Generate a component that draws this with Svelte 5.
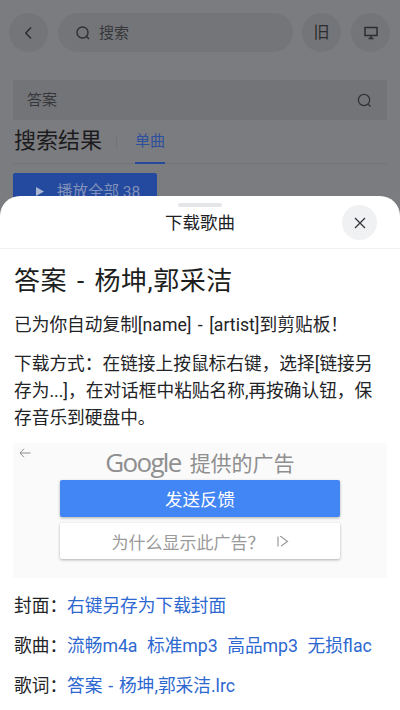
<script>
  const songLinks = ['流畅m4a', '标准mp3', '高品mp3', '无损flac']
</script>

<div class="page">
  <div class="behind">
    <div class="topbar">
      <button class="round" aria-label="返回">
        <svg width="16" height="16" viewBox="0 0 16 16"><path d="M10 2.500 4.800 8l5.200 5.500" fill="none" stroke="#2c2d30" stroke-width="1.500" /></svg>
      </button>
      <div class="pill">
        <svg width="16" height="16" viewBox="0 0 16 16"><circle cx="7.500" cy="7.500" r="5.500" fill="none" stroke="#2e2f33" stroke-width="1.400" /><path d="M11.500 11.500 14 14" stroke="#2e2f33" stroke-width="1.400" /></svg>
        <span>搜索</span>
      </div>
      <button class="round old">旧</button>
      <button class="round" aria-label="桌面">
        <svg width="16" height="16" viewBox="0 0 16 16"><path d="M2 2.500h12v8H2z" fill="none" stroke="#2c2d30" stroke-width="1.500" /><path d="M8 10.500v3M5.500 13.500h5" stroke="#2c2d30" stroke-width="1.500" /></svg>
      </button>
    </div>

    <div class="query">
      <span>答案</span>
      <svg width="15" height="15" viewBox="0 0 16 16"><circle cx="7.500" cy="7.500" r="6" fill="none" stroke="#303135" stroke-width="1.300" /><path d="M12 12l2.500 2.500" stroke="#303135" stroke-width="1.300" /></svg>
    </div>

    <div class="results">
      <h2>搜索结果</h2>
      <i class="sep"></i>
      <span class="tab">单曲</span>
    </div>

    <div class="play">
      <svg width="8" height="9" viewBox="0 0 8 9"><path d="M0 0l8 4.500-8 4.500z" fill="#a7b4d2" /></svg>
      <span>播放全部 38</span>
    </div>
  </div>

  <section class="sheet">
    <i class="handle"></i>
    <header>
      <span>下载歌曲</span>
      <button class="close" aria-label="关闭">
        <svg width="12" height="12" viewBox="0 0 12 12"><path d="M1 1l10 10M11 1 1 11" stroke="#33353a" stroke-width="1.300" /></svg>
      </button>
    </header>

    <div class="body">
      <h1>答案 - 杨坤,郭采洁</h1>
      <p class="copied">已为你自动复制[name] - [artist]到剪贴板！</p>
      <p class="howto">下载方式：在链接上按鼠标右键，选择[链接另存为...]，在对话框中粘贴名称,再按确认钮，保存音乐到硬盘中。</p>

      <div class="ad">
        <svg class="back" width="12" height="10" viewBox="0 0 12 10"><path d="M5 .800 1 5l4 4.200M1 5h10.500" fill="none" stroke="#8d8d8d" stroke-width="1" /></svg>
        <div class="ad-title"><b>Google</b><span>提供的广告</span></div>
        <div class="ad-btn blue">发送反馈</div>
        <div class="ad-btn white">
          <span>为什么显示此广告？</span>
          <svg width="13" height="13" viewBox="0 0 13 13"><path d="M2 1.500v10M4 1.500h1L11.500 6.500 5 11" fill="none" stroke="#9a9a9a" stroke-width="1.200" /></svg>
        </div>
      </div>

      <div class="row"><span class="label">封面：</span><a href="#cover">右键另存为下载封面</a></div>
      <div class="row">
        <span class="label">歌曲：</span>
        <span class="links">
          {#each songLinks as link}
            <a href="#song">{link}</a>
          {/each}
        </span>
      </div>
      <div class="row"><span class="label">歌词：</span><a class="lrc" href="#lrc">答案 - 杨坤,郭采洁.lrc</a></div>
    </div>
  </section>
</div>

<style>
  :global(body) {
    margin: 0;
    font-family: Roboto, "Noto Sans CJK SC", sans-serif;
  }

  .page {
    position: relative;
    width: 400px;
    height: 710px;
    overflow: hidden;
    background: #7b7c80;
  }

  .behind {
    padding: 13px 10px 0 9px;
    box-sizing: border-box;
  }

  button {
    border: 0;
    padding: 0;
    font: inherit;
  }

  .topbar {
    display: flex;
    align-items: center;
    gap: 10px;
  }

  .round {
    flex: none;
    width: 39px;
    height: 39px;
    border-radius: 50%;
    background: #747579;
    display: flex;
    align-items: center;
    justify-content: center;
    color: #2c2d30;
  }

  .old {
    font-size: 16px;
    padding-bottom: 3px;
    box-sizing: border-box;
  }

  .pill {
    flex: 1;
    height: 39px;
    margin-right: -1px;
    border-radius: 20px;
    background: #747579;
    display: flex;
    align-items: center;
    gap: 8px;
    padding-left: 17px;
    box-sizing: border-box;
    font-size: 15px;
    color: #36373b;
  }

  .pill span {
    margin-top: -3px;
  }

  .query {
    margin: 28px 3px 0 4px;
    height: 40px;
    background: #737478;
    display: flex;
    align-items: center;
    justify-content: space-between;
    padding: 0 15px 0 14px;
    font-size: 15px;
    color: #36373b;
  }

  .query span {
    margin-top: -3px;
  }

  .results {
    margin: 0 3px 0 4px;
    height: 43px;
    display: flex;
    align-items: center;
    border-bottom: 1px solid #737478;
  }

  h2 {
    margin: -2px 0 0 1px;
    font-size: 22px;
    line-height: 30px;
    font-weight: 400;
    color: #1b1b1d;
  }

  .sep {
    width: 1px;
    height: 14px;
    margin: 0 18px 0 14px;
    background: #737478;
  }

  .tab {
    height: 43px;
    line-height: 40px;
    font-size: 15px;
    color: #2c4f9f;
    box-sizing: border-box;
    border-bottom: 2px solid #254a9b;
    margin-bottom: -1px;
  }

  .play {
    margin: 9px 0 0 4px;
    width: 144px;
    height: 36px;
    border-radius: 2px;
    background: #234a9e;
    display: flex;
    align-items: center;
    gap: 13px;
    padding-left: 23px;
    box-sizing: border-box;
    font-size: 15.500px;
    color: #8291b9;
  }

  .play span {
    margin-top: -2px;
  }

  .sheet {
    position: absolute;
    left: 0;
    right: 0;
    top: 196px;
    bottom: 0;
    background: #fff;
    border-radius: 20px 20px 0 0;
  }

  .handle {
    position: absolute;
    left: 178px;
    top: 7px;
    width: 44px;
    height: 4px;
    border-radius: 2px;
    background: #e4e6ea;
  }

  header {
    height: 52px;
    border-bottom: 1px solid #f2f2f4;
    display: flex;
    align-items: center;
    justify-content: center;
    position: relative;
    font-size: 17.500px;
    color: #202124;
  }

  header span {
    margin-top: -2px;
  }

  .close {
    position: absolute;
    right: 23px;
    top: 9px;
    width: 35px;
    height: 35px;
    border-radius: 50%;
    background: #f0f1f3;
    display: flex;
    align-items: center;
    justify-content: center;
  }

  .body {
    padding: 0 14px;
    color: #222326;
  }

  h1 {
    margin: 14px 0 0;
    font-size: 26px;
    line-height: 36px;
    font-weight: 400;
    word-spacing: 3px;
    letter-spacing: 0.5px;
    color: #1d1e20;
  }

  p {
    margin: 13px 0 0;
    font-size: 17.700px;
    line-height: 27px;
  }

  .copied {
    word-spacing: 2px;
  }

  .howto {
    margin-top: 12px;
  }

  .ad {
    position: relative;
    margin: 11px -1px 0;
    height: 135px;
    background: #fafafa;
    display: flex;
    flex-direction: column;
    align-items: center;
  }

  .back {
    position: absolute;
    left: 6px;
    top: 5px;
  }

  .ad-title {
    height: 37px;
    display: flex;
    align-items: center;
    gap: 9px;
    font-size: 21px;
    color: #8f8f8f;
  }

  .ad-title b {
    font-family: "Open Sans", Roboto, sans-serif;
    font-weight: 400;
    font-size: 26px;
    letter-spacing: -1.700px;
  }

  .ad-btn {
    width: 280px;
    height: 36px;
    border-radius: 2px;
    display: flex;
    align-items: center;
    justify-content: center;
    box-shadow: 0 1px 3px rgba(0, 0, 0, 0.3);
  }

  .blue {
    background: #4285f4;
    color: #fff;
    font-size: 17.500px;
    height: 37px;
  }

  .white {
    margin-top: 6px;
    background: #fff;
    color: #9a9a9a;
    gap: 11px;
    font-size: 17px;
  }

  .row {
    display: flex;
    font-size: 17.700px;
    line-height: 24px;
    margin-top: 16px;
    white-space: nowrap;
  }

  .label {
    width: 53px;
    flex: none;
  }

  .links {
    display: flex;
    gap: 9.500px;
  }

  .lrc {
    word-spacing: 1.500px;
  }

  a {
    color: #2c68d0;
    text-decoration: none;
  }
</style>
